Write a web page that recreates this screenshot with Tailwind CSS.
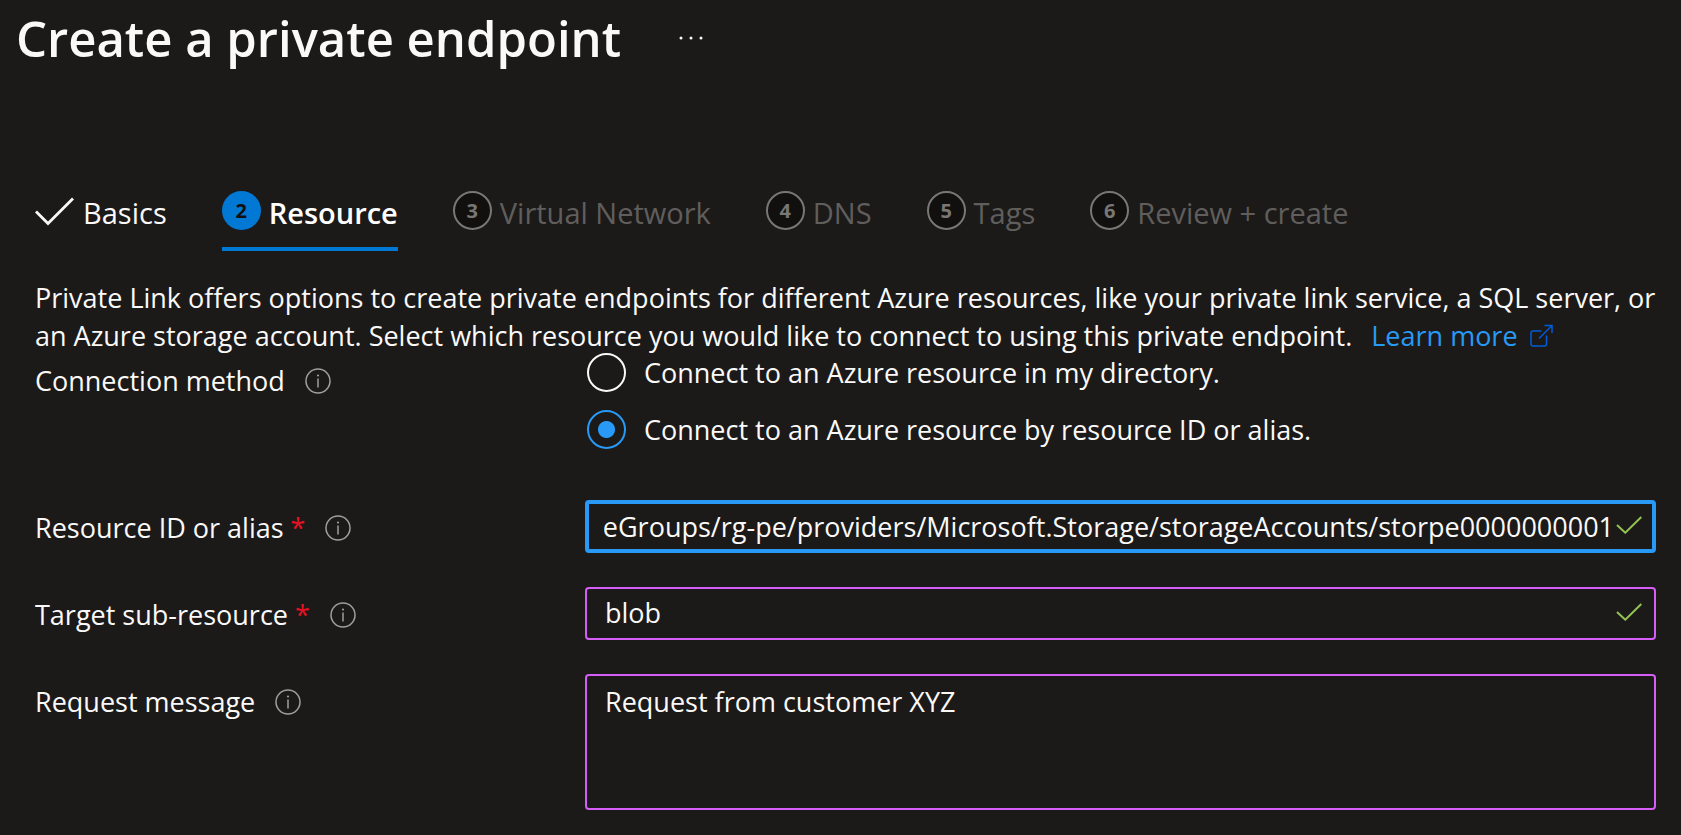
<!DOCTYPE html>
<html lang="en">
<head>
<meta charset="utf-8">
<title>Create a private endpoint</title>
<script src="https://cdn.jsdelivr.net/npm/@tailwindcss/browser@4"></script>
</head>
<body class="min-h-screen bg-[#1b1a19] font-['Open_Sans','Noto_Sans',sans-serif] text-[27px] leading-[38px] text-[#faf9f8]">
<svg class="hidden">
  <symbol id="info" viewBox="0 0 26 26"><circle cx="13" cy="13" r="12" fill="none" stroke="currentColor" stroke-width="1.5"/><path d="M13 10.500V19.500" stroke="currentColor" stroke-width="1.5"/><circle cx="13" cy="7.500" r="1.100" fill="currentColor"/></symbol>
  <symbol id="check" viewBox="0 0 26 18"><path d="M1 9L9.300 16.700L25.300 1" fill="none" stroke="currentColor" stroke-width="2"/></symbol>
</svg>

<header class="flex items-center gap-[50px] px-4">
  <h1 class="text-[49px] leading-[76px] font-semibold">Create a private endpoint</h1>
  <button type="button" aria-label="More actions" class="flex h-10 w-10 items-center justify-center"><svg class="h-1 w-6" viewBox="0 0 24 4" fill="currentColor"><circle cx="2" cy="2" r="1.500"/><circle cx="12" cy="2" r="1.500"/><circle cx="22" cy="2" r="1.500"/></svg></button>
</header>

<main class="pt-[115px] pr-[25px] pl-[35px]">
  <nav aria-label="Steps" class="text-[29px]">
    <ol class="flex gap-[55px] text-[#605e5c]">
      <li><button type="button" class="flex h-[60px] items-start gap-2 text-[#faf9f8]"><svg class="mt-[5px] h-[30px] w-10" viewBox="0 0 40 30"><path d="M1 15.500L13 27.500L38 2.500" fill="none" stroke="currentColor" stroke-width="2.800"/></svg><span class="pt-[3px]">Basics</span></button></li>
      <li><button type="button" aria-current="step" class="flex h-[60px] items-start gap-2 border-b-4 border-[#0078d4] font-semibold text-white"><span class="flex size-[39px] items-center justify-center rounded-full bg-[#0078d4] text-xl font-bold text-[#11100f]">2</span><span class="pt-[3px]">Resource</span></button></li>
      <li><button type="button" class="flex h-[60px] items-start gap-2"><span class="flex size-[39px] items-center justify-center rounded-full border-2 border-[#797775] bg-[#11100f] text-xl font-bold text-[#797775]">3</span><span class="pt-[3px]">Virtual Network</span></button></li>
      <li><button type="button" class="flex h-[60px] items-start gap-2"><span class="flex size-[39px] items-center justify-center rounded-full border-2 border-[#797775] bg-[#11100f] text-xl font-bold text-[#797775]">4</span><span class="pt-[3px]">DNS</span></button></li>
      <li><button type="button" class="flex h-[60px] items-start gap-2"><span class="flex size-[39px] items-center justify-center rounded-full border-2 border-[#797775] bg-[#11100f] text-xl font-bold text-[#797775]">5</span><span class="pt-[3px]">Tags</span></button></li>
      <li><button type="button" class="flex h-[60px] items-start gap-2"><span class="flex size-[39px] items-center justify-center rounded-full border-2 border-[#797775] bg-[#11100f] text-xl font-bold text-[#797775]">6</span><span class="pt-[3px]">Review + create</span></button></li>
    </ol>
  </nav>

  <p class="pt-7">Private Link offers options to create private endpoints for different Azure resources, like your private link service, a SQL server, or an Azure storage account. Select which resource you would like to connect to using this private endpoint. <a href="#" class="ml-3 text-[#2899f5]">Learn more <svg class="ml-1 inline-block size-6 align-[-2px] text-[#015cda]" viewBox="0 0 24 24" fill="none" stroke="currentColor" stroke-width="1.500"><path d="M12.500 7H4Q2 7 2 9V20Q2 22 4 22H15.500Q17.500 22 17.500 20V11.500M10 14.500L23 1.500M15.500 1.500H23V9"/></svg></a></p>

  <form class="-mt-0.5">
    <fieldset class="grid grid-cols-[550px_1fr]">
      <div class="flex items-center gap-5 self-start pt-[9px]"><span id="method">Connection method</span><svg class="size-[26px] text-[#a19f9d]"><use href="#info"/></svg></div>
      <div role="radiogroup" aria-labelledby="method" class="flex flex-col gap-[18px] pl-0.5">
        <label class="flex h-[39px] items-center gap-[18px]"><input type="radio" name="method" class="size-[39px] appearance-none rounded-full border-2 border-[#faf9f8]">Connect to an Azure resource in my directory.</label>
        <label class="flex h-[39px] items-center gap-[18px]"><input type="radio" name="method" checked class="size-[39px] appearance-none rounded-full border-2 border-[#2899f5] bg-[radial-gradient(circle,#2899f5_8px,transparent_9px)]">Connect to an Azure resource by resource ID or alias.</label>
      </div>
    </fieldset>

    <div class="grid grid-cols-[550px_1fr] gap-y-[34px] pt-[51px]">
      <div class="flex items-center self-start pt-[9px]"><label for="rid">Resource ID or alias <span class="text-[#e81123]">*</span></label><svg class="ml-5 size-[26px] text-[#a19f9d]"><use href="#info"/></svg></div>
      <div class="relative">
        <input id="rid" type="text" value="resourceGroups/rg-pe/providers/Microsoft.Storage/storageAccounts/storpe0000000001" class="block h-[53px] w-full rounded-sm border-4 border-[#2899f5] bg-transparent pr-[38px] pl-[15px] outline-none">
        <svg class="absolute top-4 right-[14px] h-[18px] w-[26px] text-[#92c353]"><use href="#check"/></svg>
      </div>
      <div class="flex items-center self-start pt-[9px]"><label for="sub">Target sub-resource <span class="text-[#e81123]">*</span></label><svg class="ml-5 size-[26px] text-[#a19f9d]"><use href="#info"/></svg></div>
      <div class="relative">
        <input id="sub" type="text" value="blob" class="block h-[53px] w-full rounded-sm border-2 border-[#d65df7] bg-transparent pr-10 pb-0.5 pl-[18px] outline-none">
        <svg class="absolute top-4 right-[14px] h-[18px] w-[26px] text-[#92c353]"><use href="#check"/></svg>
      </div>
      <div class="flex items-center self-start pt-[9px]"><label for="msg">Request message</label><svg class="ml-5 size-[26px] text-[#a19f9d]"><use href="#info"/></svg></div>
      <textarea id="msg" class="block h-[136px] w-full resize-none rounded-sm border-2 border-[#d65df7] bg-transparent px-[18px] py-[7px] outline-none">Request from customer XYZ</textarea>
    </div>
  </form>
</main>
<script>
  const rid = document.getElementById('rid');
  const showEnd = () => { rid.scrollLeft = rid.scrollWidth; };
  showEnd();
  addEventListener('load', showEnd);
  addEventListener('resize', showEnd);
</script>
</body>
</html>
